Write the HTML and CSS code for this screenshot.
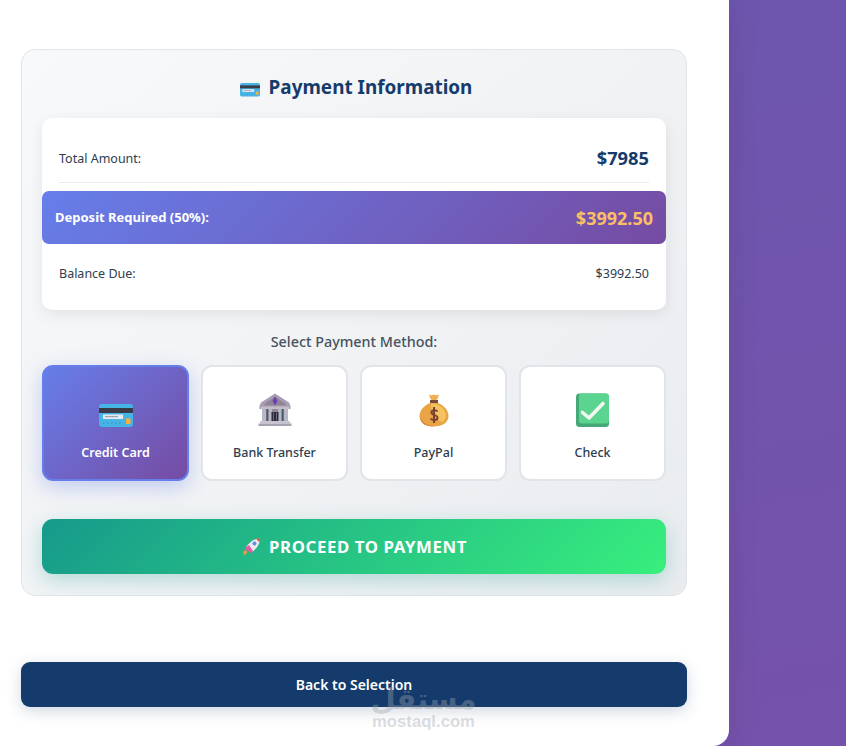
FILE: index.html
```html
<!DOCTYPE html>
<html lang="en">
<head>
<meta charset="utf-8">
<title>Payment Information</title>
<link rel="stylesheet" href="styles.css">
</head>
<body>
<svg class="defs" width="0" height="0" aria-hidden="true">
  <symbol id="card" viewBox="0 0 34 24">
    <path d="M3 1h28a3 3 0 0 1 3 3v17a3 3 0 0 1-3 3H3a3 3 0 0 1-3-3V4a3 3 0 0 1 3-3z" fill="#47b4e6"/>
    <path d="M0 5h34v5H0z" fill="#3a3b47"/>
    <path d="M4 11.500h20v4.500H4z" fill="#e8eaef"/>
    <path d="M6 13h13v1.200H6z" fill="#9aa3b5"/>
    <path d="M27 15.500h4.500V21H27z" fill="#f3b03c"/>
    <path d="M4 19.500h1.500v1H4zm4 0h1.500v1H8zm4 0h1.500v1H12zm4 0h1.500v1H16zm4 0h1.500v1H20z" fill="#2b8ec4"/>
  </symbol>
</svg>
<main class="panel">
  <section class="pay-card">
    <h2 class="pay-title">
      <svg class="title-icon"><use href="#card"/></svg>
      <span>Payment Information</span>
    </h2>
    <div class="summary">
      <div class="row row-total">
        <span class="row-label">Total Amount:</span>
        <span class="total-value">$7985</span>
      </div>
      <div class="row-deposit">
        <span class="deposit-label">Deposit Required (50%):</span>
        <span class="deposit-value">$3992.50</span>
      </div>
      <div class="row">
        <span class="row-label">Balance Due:</span>
        <span class="balance-value">$3992.50</span>
      </div>
    </div>
    <h3 class="method-title">Select Payment Method:</h3>
    <div class="methods">
      <div class="method method-active">
        <svg class="method-icon method-icon-card"><use href="#card"/></svg>
        <span class="method-name">Credit Card</span>
      </div>
      <div class="method">
        <svg class="method-icon" viewBox="0 0 34 34">
          <path d="M17 0.500 31 9.500l1.500 3.500v3h-31v-3L3 9.500z" fill="#a99cb4"/>
          <path d="M17 3.500 27 10.500l1 2H6l1-2z" fill="#8f8599"/>
          <path d="M17 3.500 19.500 8 17 12.500 14.500 8z" fill="#6a3fb0"/>
          <path d="M3 13.500h28v2.500H3z" fill="#c4bdc9"/>
          <path d="M6 16h22v12H6z" fill="#8d8a9c"/>
          <path d="M4 16h4v12H4zm7 0h3v12h-3zm9 0h3v12h-3zm6 0h4v12h-4z" fill="#b9b7c4"/>
          <path d="M8.500 16H10v12H8.500zm15.500 0h1.500v12H24z" fill="#3f5c72"/>
          <path d="M13.500 19h7v9h-7z" fill="#2c2a3a"/>
          <path d="M15 19.500h1v8h-1zm3 0h1v8h-1z" fill="#6d6a80"/>
          <path d="M2 28h30v2.500H2z" fill="#c9c4cf"/>
          <path d="M0.500 30.500h33V33h-33z" fill="#a7a1b1"/>
        </svg>
        <span class="method-name">Bank Transfer</span>
      </div>
      <div class="method">
        <svg class="method-icon" viewBox="0 0 34 34">
          <path d="M12 1.500c1.500.8 2.500 1 3.500.5 1-.8 2-.8 3 0 1 .5 2 .3 3.500-.5-.5 2.500-1.500 4.500-3 6h-4c-1.500-1.500-2.500-3.500-3-6z" fill="#eeb052"/>
          <path d="M13 7h8v3h-8z" fill="#7c4a35"/>
          <path d="M13 10C6.500 12.500 2.500 18 2.500 23c0 7 7 10.500 14.500 10.500S31.500 30 31.500 23c0-5-4-10.500-10.500-13z" fill="#e9a445"/>
          <path d="M14 11c6-1 12.500 3 14.500 9 1 4 0 7-3 9-4-1-7-4-9-7-2-4-2.500-8-2.500-11z" fill="#f4c35f"/>
          <path d="M3 25c3 6 9 7.500 14 8.500-7 0-12.500-2-14-8.500z" fill="#cf7c2e"/>
          <path d="M20.500 18.500c-1-1.500-6-2-6 1 0 3.200 6 2 6 5.200 0 3.200-5.500 2.800-6.800.8M17 14v16" fill="none" stroke="#7a4030" stroke-width="2"/>
        </svg>
        <span class="method-name">PayPal</span>
      </div>
      <div class="method">
        <svg class="method-icon" viewBox="0 0 34 34">
          <rect x="0" y="0.500" width="33" height="33.500" rx="3.500" fill="#46a877"/>
          <rect x="3" y="0.500" width="30" height="30" rx="3" fill="#5bd48f"/>
          <path d="M6.500 19.500 13 25 27 10.500" fill="none" stroke="#f4f6f4" stroke-width="3.600" stroke-linecap="round" stroke-linejoin="round"/>
        </svg>
        <span class="method-name">Check</span>
      </div>
    </div>
    <button class="proceed" type="button">
      <svg class="rocket" viewBox="0 0 18 17">
        <path d="M3 9C7 4 11 1 17 0c0 6-3 10-8 14z" fill="#eceaf0"/>
        <path d="M13 0.700 17 0c0 1.500-.2 3-.6 4.200z" fill="#d8552f"/>
        <circle cx="11.500" cy="5.500" r="2" fill="#5f8fe0"/>
        <path d="M3 9 6 7 10 13 8 15c-1 0-2-1-2.500-2L4 13 2 11z" fill="#df5fa5"/>
        <path d="M2 12 4.500 14 2.500 16.500 0.500 17 0.300 14z" fill="#ef9a3a"/>
      </svg>
      <span>PROCEED TO PAYMENT</span>
    </button>
  </section>
  <button class="back" type="button">Back to Selection</button>
</main>
<div class="watermark" aria-hidden="true">
  <span class="wm-ar" lang="ar" dir="rtl">مستقل</span>
  <span class="wm-en">mostaql.com</span>
</div>
</body>
</html>
```
FILE: styles.css
```css
* { box-sizing: border-box; }
html, body { margin: 0; height: 746px; overflow: hidden; }
body {
  position: relative;
  background: linear-gradient(170deg, #6c56ae 0%, #7552ab 100%);
  font-family: "Noto Sans", "Open Sans", sans-serif;
  color: #2c3e50;
}
.defs { position: absolute; }
.panel {
  width: 729px;
  height: 746px;
  padding: 49px 42px 0 21px;
  background: #fff;
  border-bottom-right-radius: 16px;
  box-shadow: 0 0 30px rgba(0, 0, 0, 0.1);
}
.pay-card {
  height: 547px;
  padding: 20px;
  background: linear-gradient(135deg, #f8f9fa 0%, #e9ecef 100%);
  border: 1px solid #e1e4e8;
  border-radius: 14px;
}
.pay-title {
  display: flex;
  justify-content: center;
  align-items: center;
  gap: 9px;
  height: 34px;
  margin: 0 0 14px;
  padding-left: 4px;
  font-size: 18.900px;
  font-weight: 700;
  line-height: 34px;
  color: #153b6b;
}
.title-icon { width: 20px; height: 15px; margin-top: 5px; }
.summary {
  height: 192px;
  padding: 17px;
  background: #fff;
  border-radius: 10px;
  box-shadow: 0 4px 15px rgba(0, 0, 0, 0.08);
}
.row {
  display: flex;
  justify-content: space-between;
  align-items: center;
  height: 41px;
  margin-top: 9px;
}
.row-total {
  height: 48px;
  margin-top: 0;
  border-bottom: 1px solid #e9ecef;
}
.row-label { font-size: 12.500px; color: #2c3e50; }
.total-value { font-size: 18.300px; font-weight: 700; line-height: 24px; margin-top: -1px; color: #153b6b; }
.balance-value { font-size: 12.500px; color: #2c3e50; }
.row-deposit {
  display: flex;
  justify-content: space-between;
  align-items: center;
  height: 53px;
  margin: 8px -17px 0;
  padding: 0 13px;
  background: linear-gradient(135deg, #667eea 0%, #764ba2 100%);
  border-radius: 7px;
  color: #fff;
}
.deposit-label { margin-top: -2px; font-size: 13px; font-weight: 700; }
.deposit-value { font-size: 18px; font-weight: 700; color: #fbbf66; }
.method-title {
  height: 24px;
  margin: 20px 0 11px;
  font-size: 14.350px;
  font-weight: 500;
  line-height: 24px;
  text-align: center;
  color: #47525f;
}
.methods {
  display: grid;
  grid-template-columns: repeat(4, 1fr);
  gap: 12px;
  height: 116px;
}
.method {
  display: flex;
  flex-direction: column;
  align-items: center;
  padding-top: 26px;
  background: #fff;
  border: 2px solid #e1e4e8;
  border-radius: 11px;
}
.method-active {
  background: linear-gradient(135deg, #667eea 0%, #764ba2 100%);
  border-color: #667eea;
  color: #fff;
  box-shadow: 0 6px 20px rgba(102, 126, 234, 0.35);
}
.method-icon { width: 34px; height: 34px; }
.method-icon-card { height: 24px; margin: 10px 0 0; }
.method-name {
  margin-top: 17px;
  font-size: 12.500px;
  font-weight: 500;
  line-height: 18px;
}
.method-active .method-name { font-weight: 600; }
.proceed {
  display: flex;
  justify-content: center;
  align-items: center;
  gap: 8px;
  width: 100%;
  height: 55px;
  margin-top: 38px;
  padding: 0 0 0 2px;
  border: 0;
  border-radius: 11px;
  background: linear-gradient(135deg, #16998b 0%, #38ef7d 100%);
  box-shadow: 0 6px 20px rgba(22, 153, 139, 0.28);
  color: #fff;
  font-family: inherit;
  font-size: 16.800px;
  font-weight: 700;
  letter-spacing: 0.6px;
}
.rocket { width: 18px; height: 17px; }
.back {
  display: block;
  width: 100%;
  height: 45px;
  margin-top: 66px;
  padding-top: 1px;
  border: 0;
  border-radius: 9px;
  background: #143b6b;
  box-shadow: 0 4px 15px rgba(20, 59, 107, 0.2);
  color: #fff;
  font-family: inherit;
  font-size: 14px;
  font-weight: 600;
}
.watermark {
  position: absolute;
  left: 372px;
  top: 686px;
  width: 103px;
  display: flex;
  flex-direction: column;
  align-items: center;
  color: rgba(160, 165, 175, 0.4);
  pointer-events: none;
}
.wm-ar {
  height: 26px;
  font-family: "DejaVu Sans", sans-serif;
  font-size: 29px;
  font-weight: 700;
  line-height: 26px;
}
.wm-en {
  font-family: "Liberation Sans", sans-serif;
  font-size: 16.700px;
  font-weight: 700;
  line-height: 20px;
  white-space: nowrap;
}
```
